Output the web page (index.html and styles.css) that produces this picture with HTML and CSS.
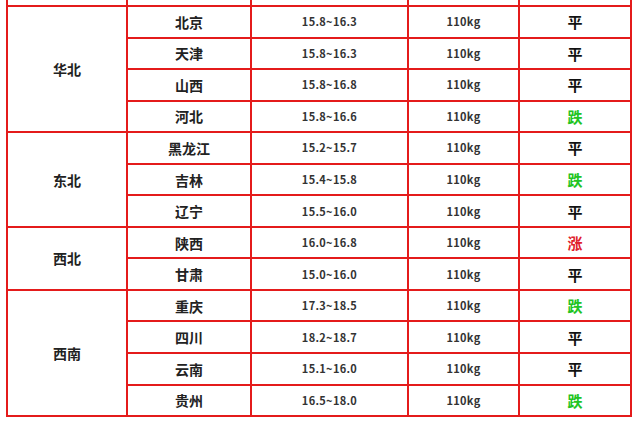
FILE: index.html
```html
<!DOCTYPE html>
<html lang="zh">
<head>
<meta charset="utf-8">
<link rel="stylesheet" href="styles.css">
</head>
<body>
<table class="grid">
<colgroup>
<col class="c1"><col class="c2"><col class="c3"><col class="c4"><col class="c5">
</colgroup>
<tbody>
<tr class="cut"><td></td><td></td><td></td><td></td><td></td></tr>
<tr><td class="region" rowspan="4">华北</td><td class="prov">北京</td><td class="num">15.8~16.3</td><td class="num">110kg</td><td class="trend flat">平</td></tr>
<tr><td class="prov">天津</td><td class="num">15.8~16.3</td><td class="num">110kg</td><td class="trend flat">平</td></tr>
<tr><td class="prov">山西</td><td class="num">15.8~16.8</td><td class="num">110kg</td><td class="trend flat">平</td></tr>
<tr><td class="prov">河北</td><td class="num">15.8~16.6</td><td class="num">110kg</td><td class="trend down">跌</td></tr>
<tr><td class="region" rowspan="3">东北</td><td class="prov">黑龙江</td><td class="num">15.2~15.7</td><td class="num">110kg</td><td class="trend flat">平</td></tr>
<tr><td class="prov">吉林</td><td class="num">15.4~15.8</td><td class="num">110kg</td><td class="trend down">跌</td></tr>
<tr><td class="prov">辽宁</td><td class="num">15.5~16.0</td><td class="num">110kg</td><td class="trend flat">平</td></tr>
<tr><td class="region" rowspan="2">西北</td><td class="prov">陕西</td><td class="num">16.0~16.8</td><td class="num">110kg</td><td class="trend up">涨</td></tr>
<tr><td class="prov">甘肃</td><td class="num">15.0~16.0</td><td class="num">110kg</td><td class="trend flat">平</td></tr>
<tr><td class="region" rowspan="4">西南</td><td class="prov">重庆</td><td class="num">17.3~18.5</td><td class="num">110kg</td><td class="trend down">跌</td></tr>
<tr><td class="prov">四川</td><td class="num">18.2~18.7</td><td class="num">110kg</td><td class="trend flat">平</td></tr>
<tr><td class="prov">云南</td><td class="num">15.1~16.0</td><td class="num">110kg</td><td class="trend flat">平</td></tr>
<tr><td class="prov">贵州</td><td class="num">16.5~18.0</td><td class="num">110kg</td><td class="trend down">跌</td></tr>
</tbody>
</table>
</body>
</html>
```

FILE: styles.css
```css
html, body {
  margin: 0;
  padding: 0;
  background: #ffffff;
}
body {
  font-family: "Noto Sans CJK SC", "Noto Sans", sans-serif;
  color: #222;
}
.grid {
  margin-left: 6px;
  border-collapse: collapse;
  table-layout: fixed;
  width: 624px;
}
.c1 { width: 120px; }
.c2 { width: 124px; }
.c3 { width: 157px; }
.c4 { width: 111px; }
.c5 { width: 112px; }
.grid td {
  border: 2px solid #e41b1b;
  text-align: center;
  vertical-align: middle;
  padding: 0;
  height: 29.55px;
  line-height: 1;
}
.grid tr.cut td {
  border-top: none;
  height: 5px;
}
.region, .prov {
  font-size: 14px;
  font-weight: 700;
  color: #222;
}
.num {
  font-size: 11px;
  font-weight: 700;
  color: #333;
  letter-spacing: 0.3px;
}
.trend {
  font-size: 15px;
  font-weight: 700;
}
.flat { color: #111; }
.down { color: #22c422; }
.up { color: #e0202a; }
```
